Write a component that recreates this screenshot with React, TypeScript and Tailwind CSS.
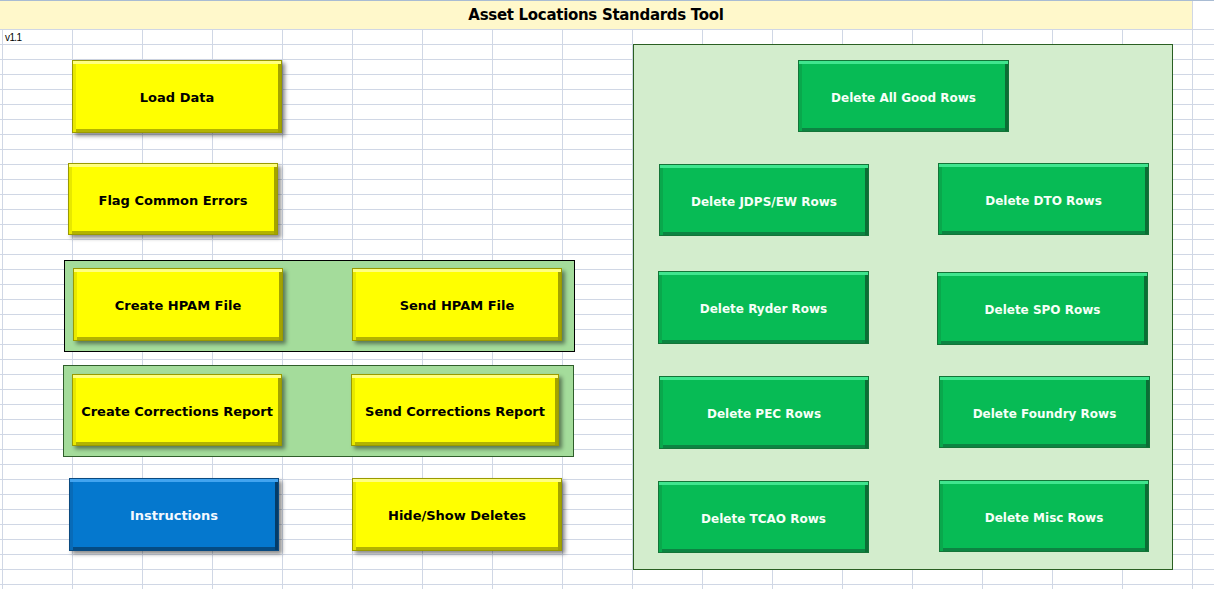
import React from 'react'

type Tone = 'yellow' | 'green' | 'blue'

const tones: Record<Tone, string> = {
  yellow:
    'bg-[#ffff00] text-black text-[13px] border-[#9a9a00] shadow-[inset_0_3px_0_#ffff80,inset_3px_0_0_#e8e800,inset_-3px_0_0_#a3a300,inset_0_-3px_0_#b3b300,3px_3px_4px_rgba(0,0,0,0.45)]',
  green:
    'bg-[#07bb55] text-[#f6fff8] text-[12px] border-[#137538] shadow-[inset_0_3px_0_#40e58e,inset_3px_0_0_#09a84c,inset_-3px_0_0_#0b6e35,inset_0_-3px_0_#0c8442]',
  blue:
    'bg-[#0578ce] text-[#f4f9ff] text-[13px] border-[#0a4a80] shadow-[inset_0_3px_0_#42a4f0,inset_3px_0_0_#086bb8,inset_-3px_0_0_#043c68,inset_0_-3px_0_#054c84,3px_3px_4px_rgba(0,0,0,0.45)]',
}

const Btn = ({ label, tone, className = '' }: { label: string; tone: Tone; className?: string }) => (
  <div className={`shrink-0 flex items-center justify-center pt-[3px] border font-bold ${tones[tone]} ${className}`}>
    {label}
  </div>
)

const App = () => {
  return (
    <div className="w-[1214px] h-[589px] overflow-hidden bg-white font-['DejaVu_Sans',sans-serif]">
      {/* title row */}
      <div className="flex h-[29px] border-t border-[#a9bcd3]">
        <div className="w-[1192px] h-[28px] bg-[#fff8cb] flex items-center justify-center text-[15px] font-bold tracking-[-0.3px] text-black">
          Asset Locations Standards Tool
        </div>
        <div className="flex-1 h-[28px] border-l border-[#d0d7e5]" />
      </div>

      {/* sheet body */}
      <div className="h-[560px] bg-white bg-[linear-gradient(to_right,#d0d7e5_1px,transparent_1px),linear-gradient(to_bottom,#d0d7e5_1px,transparent_1px)] bg-[size:70px_15px] bg-[position:2px_0px]">
        <div className="h-[15px] pl-[5px] pt-[4px] text-[10px] leading-[10px] tracking-[-0.6px] font-['Liberation_Sans',sans-serif] text-black">
          v1.1
        </div>

        <div className="flex items-start">
          {/* left side */}
          <div className="ml-[63px] w-[512px] flex flex-col items-start">
            <Btn label="Load Data" tone="yellow" className="mt-[16px] ml-[9px] w-[210px] h-[73px]" />
            <Btn label="Flag Common Errors" tone="yellow" className="mt-[30px] ml-[5px] w-[210px] h-[72px]" />

            <div className="mt-[25px] ml-[1px] w-[511px] h-[92px] border border-black bg-[#a4dc9b] flex items-start pl-[8px] pt-[7px] gap-[69px]">
              <Btn label="Create HPAM File" tone="yellow" className="w-[210px] h-[73px]" />
              <Btn label="Send HPAM File" tone="yellow" className="w-[210px] h-[73px]" />
            </div>

            <div className="mt-[13px] w-[511px] h-[92px] border border-[#2f5e2a] bg-[#a4dc9b] flex items-start pl-[8px] pt-[8px] gap-[69px]">
              <Btn label="Create Corrections Report" tone="yellow" className="w-[210px] h-[72px]" />
              <Btn label="Send Corrections Report" tone="yellow" className="w-[208px] h-[72px]" />
            </div>

            <div className="mt-[21px] ml-[6px] flex items-start gap-[73px]">
              <Btn label="Instructions" tone="blue" className="w-[210px] h-[73px]" />
              <Btn label="Hide/Show Deletes" tone="yellow" className="w-[210px] h-[73px]" />
            </div>
          </div>

          {/* right panel */}
          <div className="ml-[58px] w-[540px] h-[526px] border border-[#2a5f22] bg-[#d3edcd] flex flex-col items-start">
            <Btn label="Delete All Good Rows" tone="green" className="mt-[15px] ml-[164px] w-[211px] h-[72px]" />

            <div className="mt-[31px] flex items-start">
              <Btn label="Delete JDPS/EW Rows" tone="green" className="mt-[1px] ml-[25px] w-[210px] h-[72px]" />
              <Btn label="Delete DTO Rows" tone="green" className="ml-[69px] w-[211px] h-[72px]" />
            </div>

            <div className="mt-[35px] flex items-start">
              <Btn label="Delete Ryder Rows" tone="green" className="ml-[24px] w-[211px] h-[73px]" />
              <Btn label="Delete SPO Rows" tone="green" className="mt-[1px] ml-[68px] w-[211px] h-[73px]" />
            </div>

            <div className="mt-[31px] flex items-start">
              <Btn label="Delete PEC Rows" tone="green" className="ml-[25px] w-[210px] h-[73px]" />
              <Btn label="Delete Foundry Rows" tone="green" className="ml-[70px] w-[211px] h-[72px]" />
            </div>

            <div className="mt-[31px] flex items-start">
              <Btn label="Delete TCAO Rows" tone="green" className="mt-[1px] ml-[24px] w-[211px] h-[72px]" />
              <Btn label="Delete Misc Rows" tone="green" className="ml-[70px] w-[210px] h-[72px]" />
            </div>
          </div>
        </div>
      </div>
    </div>
  )
}

export default App
